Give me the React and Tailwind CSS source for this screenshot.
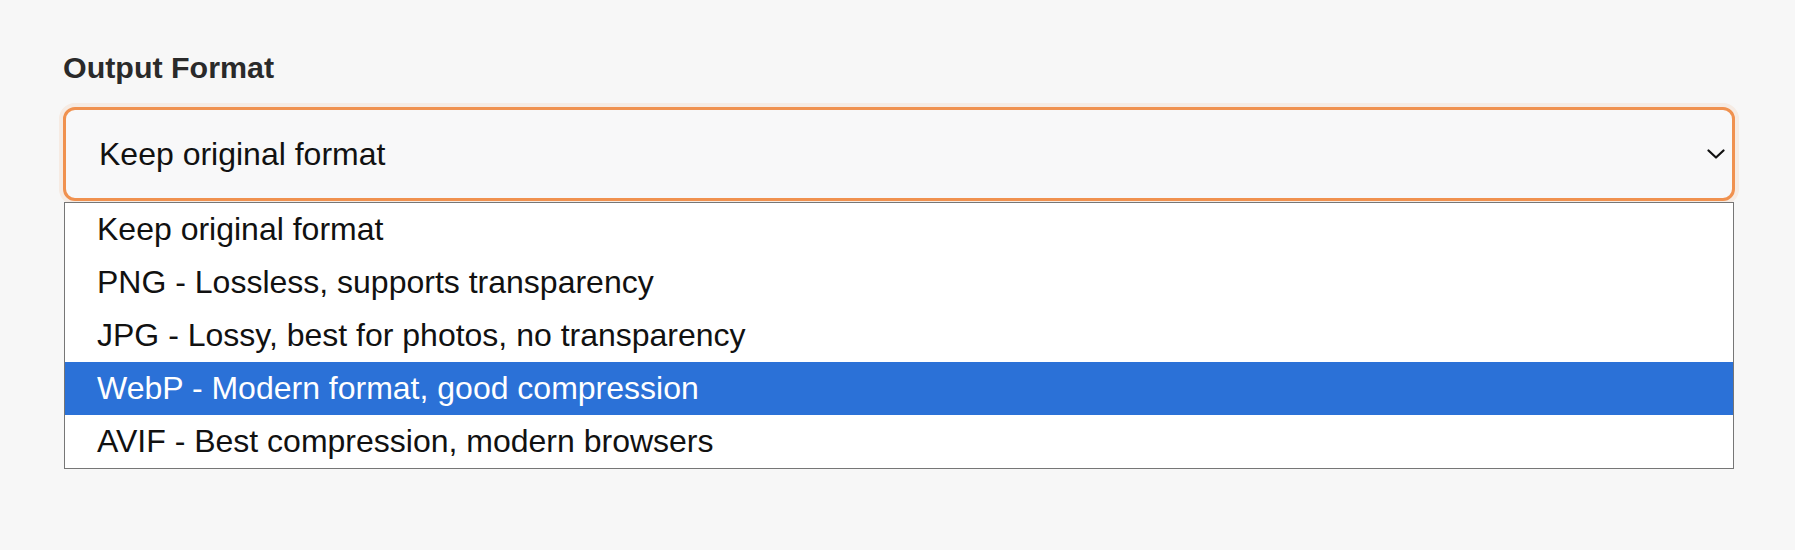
import { useState } from "react";

const options = [
  "Keep original format",
  "PNG - Lossless, supports transparency",
  "JPG - Lossy, best for photos, no transparency",
  "WebP - Modern format, good compression",
  "AVIF - Best compression, modern browsers",
];

function Chevron() {
  return (
    <svg width="18" height="10" viewBox="0 0 18 10" className="shrink-0">
      <polyline
        points="1.5,1.5 9,8.5 16.5,1.5"
        fill="none"
        stroke="#111"
        strokeWidth="2.2"
        strokeLinecap="round"
        strokeLinejoin="round"
      />
    </svg>
  );
}

export default function App() {
  const [selected] = useState(0);
  const [hover] = useState(3);

  return (
    <div className="w-full h-[550px] bg-[#f7f7f7] pl-[63px] pr-[60px] pt-[49px] font-['Liberation_Sans',Arial,sans-serif]">
      <label className="block text-[30.4px] leading-[36px] font-bold text-[#2a2a2a]">
        Output Format
      </label>
      <div className="relative mt-[22px]">
        <div className="flex items-center h-[94px] w-full rounded-[12px] border-[3px] border-[#f0914f] bg-[#f8f8f9] pl-[33px] pr-[7px] shadow-[0_0_0_4px_rgba(240,145,79,0.12)]">
          <span className="text-[32px] leading-[37px] text-[#111]">
            {options[selected]}
          </span>
          <span className="ml-auto">
            <Chevron />
          </span>
        </div>
        <ul className="absolute top-[calc(100%+1px)] left-[1px] right-[1px] border border-[#767676] bg-white">
          {options.map((opt, i) => (
            <li
              key={opt}
              className={
                i === hover
                  ? "h-[53px] pl-[32px] text-[32px] leading-[53px] bg-[#2b71d7] text-white"
                  : "h-[53px] pl-[32px] text-[32px] leading-[53px] text-[#111]"
              }
            >
              {opt}
            </li>
          ))}
        </ul>
      </div>
    </div>
  );
}
